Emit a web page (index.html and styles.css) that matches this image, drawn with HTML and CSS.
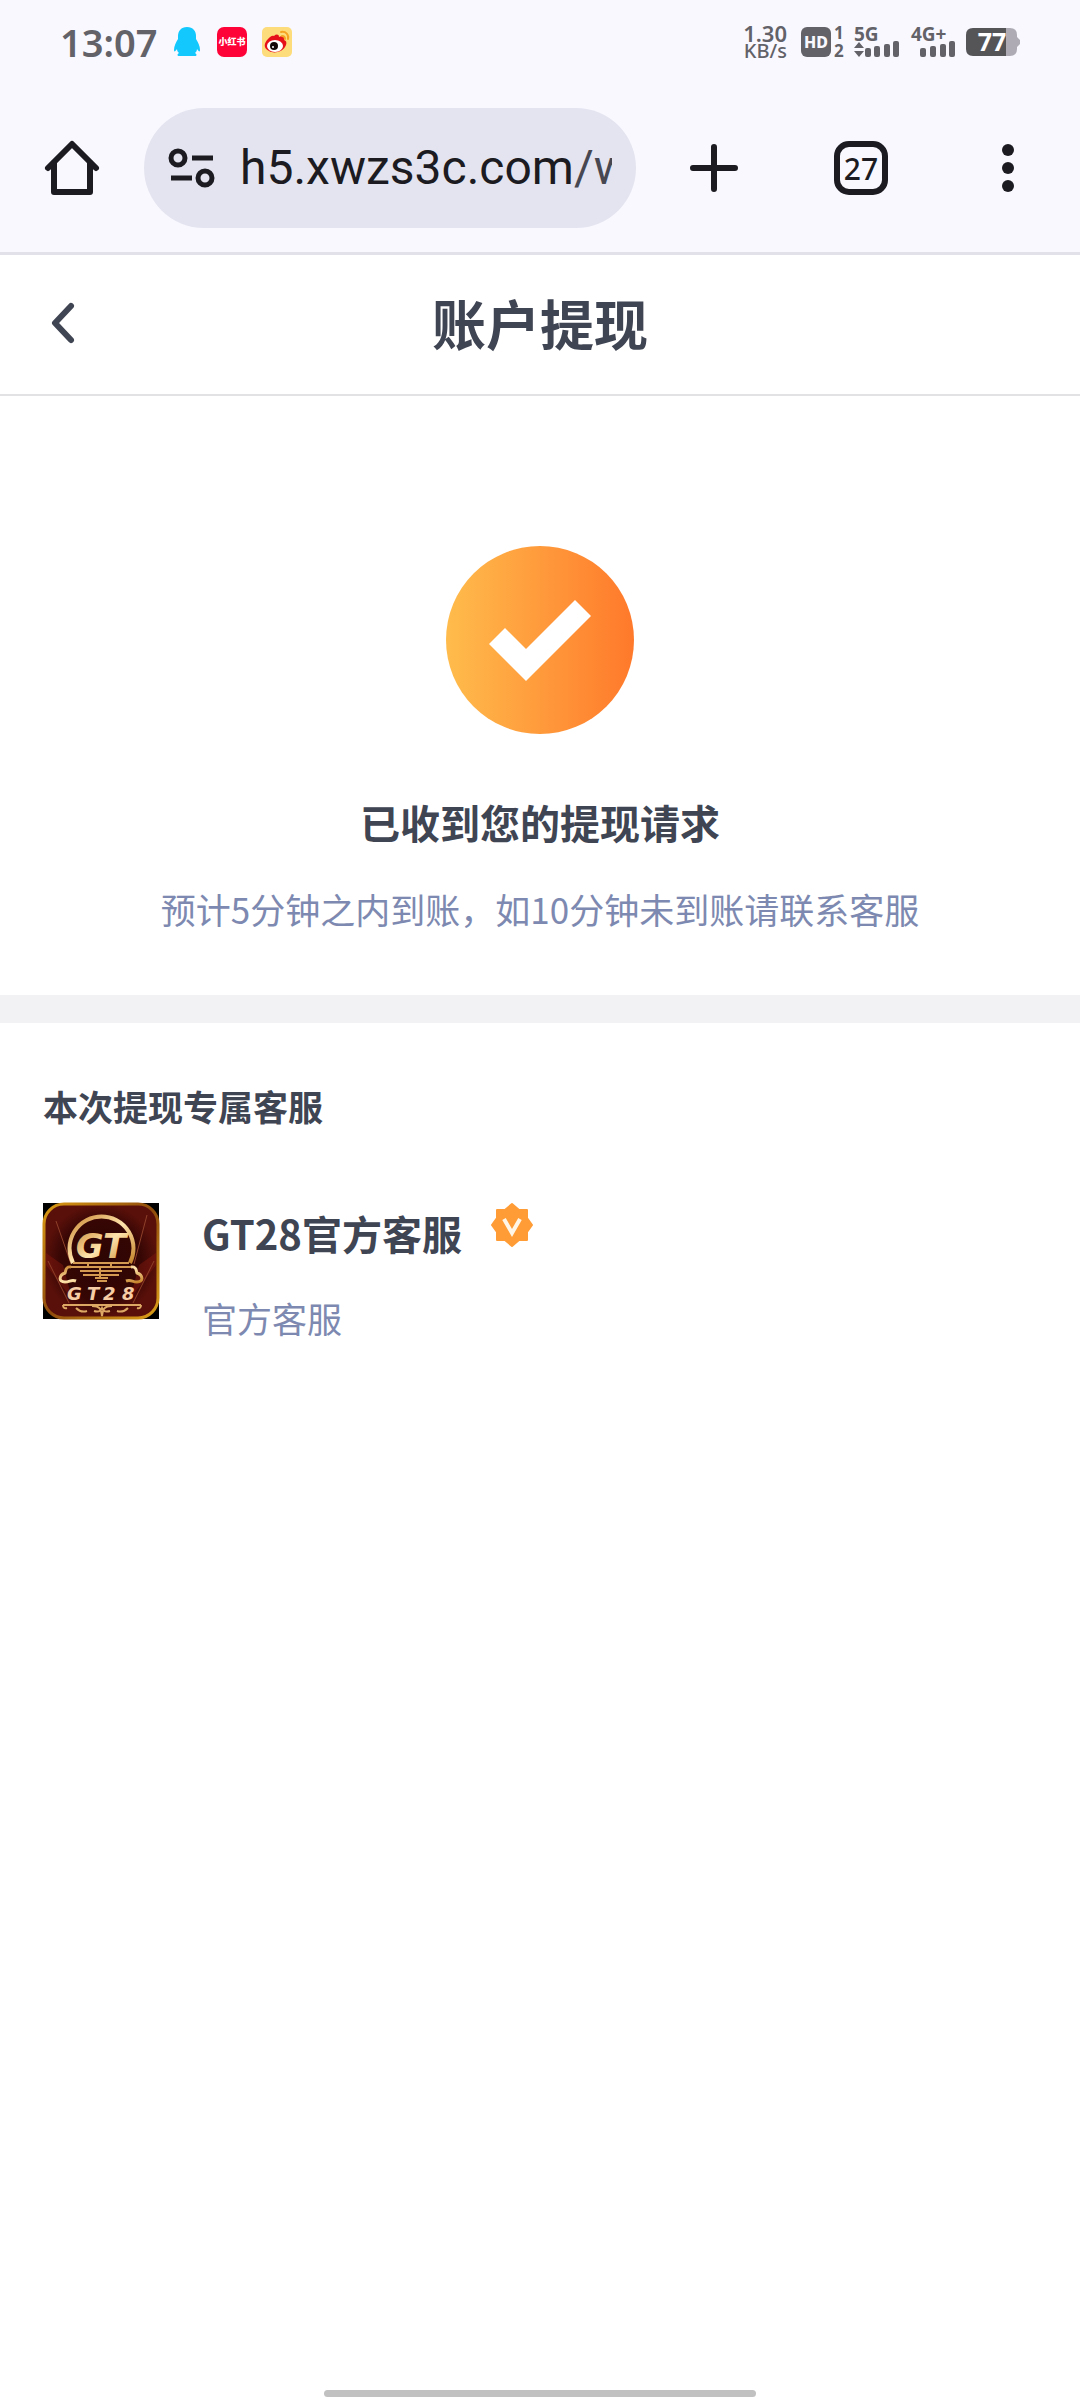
FILE: index.html
```html
<!DOCTYPE html>
<html lang="zh-CN">
<head>
<meta charset="utf-8">
<meta name="viewport" content="width=device-width, initial-scale=1">
<title>账户提现</title>
<link rel="stylesheet" href="styles.css">
</head>
<body>
<div class="screen">
  <div class="chrome">
    <div class="status">
      <div class="status-left">
        <span class="clock">13:07</span>
        <svg class="app-icon" viewBox="0 0 30 30" aria-hidden="true"><path fill="#12c8fd" d="M15 0C9 0 6 4 6 9v3C4 15 2 19 2 23c0 2 1 2 3-1 0 2 1 3 2 4-2 1-2 3 0 3h16c2 0 2-2 0-3 1-1 2-2 2-4 2 3 3 3 3 1 0-4-2-8-4-11V9c0-5-3-9-9-9z"/></svg>
        <svg class="app-icon" viewBox="0 0 30 30" aria-hidden="true"><rect width="30" height="30" rx="7" fill="#fe0338"/><text class="red-text" x="15" y="18" text-anchor="middle">小红书</text></svg>
        <svg class="app-icon" viewBox="0 0 30 30" aria-hidden="true"><rect width="30" height="30" rx="5" fill="#fddd7b"/><path fill="#e6101b" d="M12 9c2-2 5-2 5 1 4-2 7-1 5 3 3 1 3 4 1 7-3 5-11 7-16 4-6-3-5-8-1-12 2-2 4-4 6-3z"/><ellipse cx="13" cy="19" rx="8" ry="6" fill="#fff"/><circle cx="12" cy="19" r="4" fill="#120808"/><circle cx="11" cy="20" r="1" fill="#fff"/><path fill="none" stroke="#f6a323" stroke-width="2" stroke-linecap="round" d="M19 5c5-1 8 3 7 7M20 9c2 0 3 1 3 3"/></svg>
      </div>
      <div class="status-right">
        <div class="speed"><span class="rate">1.30</span><span>KB/s</span></div>
        <svg class="hd" viewBox="0 0 44 32" aria-hidden="true"><rect x="1" y="1" width="30" height="30" rx="6" fill="#626268"/><text class="hd-text" x="16" y="22" text-anchor="middle">HD</text><text class="tiny" x="34" y="13">1</text><text class="tiny" x="34" y="31">2</text></svg>
        <svg class="signal" viewBox="0 0 46 32" aria-hidden="true"><text class="net" x="0" y="15">5G</text><path fill="#626268" d="M5 16l5 6H0zM5 31l5-6H0z"/><g fill="#626268"><rect x="11" y="22" width="6" height="9" rx="2"/><rect x="20" y="20" width="6" height="11" rx="2"/><rect x="30" y="18" width="6" height="13" rx="2"/><rect x="39" y="15" width="6" height="16" rx="2"/></g></svg>
        <svg class="signal" viewBox="0 0 46 32" aria-hidden="true"><text class="net" x="1" y="15">4G+</text><g fill="#626268"><rect x="10" y="22" width="6" height="9" rx="2"/><rect x="20" y="20" width="6" height="11" rx="2"/><rect x="30" y="18" width="6" height="13" rx="2"/><rect x="39" y="15" width="6" height="16" rx="2"/></g></svg>
        <svg class="battery" viewBox="0 0 54 28" aria-hidden="true"><path fill="#aeabb5" d="M34 0h10q7 0 7 7v2l3 3v4l-3 3v2q0 7-7 7H34z"/><path fill="#555558" d="M7 0h33v28H7q-7 0-7-7V7q0-7 7-7z"/><text class="level" x="26" y="23" text-anchor="middle">77</text></svg>
      </div>
    </div>
    <div class="toolbar">
      <button class="icon-btn" aria-label="主页"><svg width="54" height="54" viewBox="0 0 54 54"><g fill="none" stroke="#1b1b21" stroke-width="6" stroke-linecap="round" stroke-linejoin="round"><path d="M3 27L27 3l24 24"/><path d="M9 22v29h36V22"/></g></svg></button>
      <div class="omnibox">
        <svg width="46" height="40" viewBox="0 0 46 40" aria-hidden="true"><g fill="none" stroke="#1b1b21" stroke-width="5"><circle cx="10" cy="10" r="7"/><path d="M24 10h21M3 30h21"/><circle cx="37" cy="30" r="7"/></g></svg>
        <a class="url" href="#">h5.xwzs3c.com<span class="path">/w</span></a>
      </div>
      <div class="actions">
        <button class="icon-btn" aria-label="新标签页"><svg width="54" height="54" viewBox="0 0 54 54"><path d="M27 6v42M6 27h42" stroke="#1b1b21" stroke-width="6" stroke-linecap="round"/></svg></button>
        <button class="icon-btn" aria-label="标签页"><span class="tabs">27</span></button>
        <button class="icon-btn" aria-label="更多"><svg width="54" height="54" viewBox="0 0 54 54"><g fill="#1b1b21"><circle cx="27" cy="9" r="6"/><circle cx="27" cy="27" r="6"/><circle cx="27" cy="45" r="6"/></g></svg></button>
      </div>
    </div>
  </div>

  <header class="page-head">
    <button class="back" aria-label="返回"><svg width="24" height="40" viewBox="0 0 24 40"><path d="M21 3L5 20l16 17" fill="none" stroke="#404553" stroke-width="6" stroke-linecap="round" stroke-linejoin="round"/></svg></button>
    <h1>账户提现</h1>
  </header>

  <main>
    <section class="result">
      <svg width="188" height="188" viewBox="0 0 188 188" aria-hidden="true"><defs><linearGradient id="orange"><stop offset="0" stop-color="#ffbc4c"/><stop offset="1" stop-color="#ff792b"/></linearGradient></defs><circle cx="94" cy="94" r="94" fill="url(#orange)"/><path fill="#fff" d="M43 98l16-16 21 21 49-49 16 16-65 65z"/></svg>
      <h2>已收到您的提现请求</h2>
      <p>预计5分钟之内到账，如10分钟未到账请联系客服</p>
    </section>
    <section class="service">
      <h3>本次提现专属客服</h3>
      <div class="agent">
        <svg class="avatar" viewBox="0 0 116 116" role="img" aria-label="GT28">
          <defs>
            <radialGradient id="wine"><stop offset="0" stop-color="#2c0503"/><stop offset=".7" stop-color="#350604"/><stop offset="1" stop-color="#5a100a"/></radialGradient>
            <linearGradient id="gold" x2="1" y2="1"><stop offset="0" stop-color="#c98632"/><stop offset=".5" stop-color="#ffe4ac"/><stop offset="1" stop-color="#c48229"/></linearGradient>
            <linearGradient id="frame" y2="1"><stop offset="0" stop-color="#d99a13"/><stop offset=".5" stop-color="#8f4b0c"/><stop offset="1" stop-color="#dca019"/></linearGradient>
          </defs>
          <rect width="116" height="116" fill="#000"/>
          <rect x="1" y="1" width="114" height="114" rx="20" fill="url(#wine)" stroke="url(#frame)" stroke-width="3"/>
          <g fill="#7d180e" opacity=".5"><path d="M3 50l17 12 9 34L3 62zM113 50L96 62l-9 34 26-34z"/></g>
          <g fill="none" stroke="#8e4029"><path d="M13 18l15 43M104 12L91 61M5 58l21 42M111 58L90 100"/></g>
          <path d="M30 60A32 32 0 1 1 87 60" fill="none" stroke="url(#gold)" stroke-width="4"/>
          <text class="mark" x="58" y="55" text-anchor="middle">GT</text>
          <g fill="none" stroke="#d59a51" stroke-width="2"><path d="M30 60h56M28 64h60M37 68h42M40 72h36M52 75h13M54 78h10M45 60v4M68 60v4M57 64v10"/></g>
          <g fill="none" stroke="url(#gold)" stroke-width="3"><path d="M28 64c-6-1-5 4-6 6-6 2-7 9 0 9 5 0 6-3 11-1M88 64c6-1 5 4 6 6 6 2 7 9 0 9-5 0-6-3-11-1"/></g>
          <text class="brand" x="24" y="97">G</text><text class="brand" x="44" y="97">T</text><text class="brand" x="60" y="97">2</text><text class="brand" x="79" y="97">8</text>
          <g fill="none" stroke="#dca864" stroke-width="2"><path d="M20 102h78M20 102q0 4 4 3M98 102q0 4-4 3M33 105q5 5 11 3M85 105q-5 5-11 3M49 103c8 0 9 3 10 10 1-7 2-10 10-10M51 108q6 2 8-3 2 5 8 3"/></g>
        </svg>
        <div class="info">
          <div class="name-row"><strong>GT28官方客服</strong>
            <svg width="42" height="44" viewBox="0 0 42 44" aria-hidden="true"><path fill="#ff9c36" stroke="#ff9c36" stroke-width="2" stroke-linejoin="round" d="M21 1l7 6h8v8l5 7-5 7v8h-8l-7 6-7-6H6v-8l-5-7 5-7V7h8z"/><path d="M13 16l8 14 8-14" fill="none" stroke="#fff6e7" stroke-width="4"/></svg>
          </div>
          <p>官方客服</p>
        </div>
      </div>
    </section>
  </main>
  <div class="gesture"></div>
</div>
</body>
</html>
```
FILE: styles.css
```css
* { box-sizing: border-box; }
body { margin: 0; background: #fff; color: #404553; font-family: "Noto Sans CJK SC", sans-serif; }
h1, h2, h3, p { margin: 0; }
button { border: 0; padding: 0; background: none; color: inherit; font: inherit; }
svg { display: block; flex: none; overflow: visible; }
.screen { min-height: 100vh; display: flex; flex-direction: column; }

.chrome { background: #f9f8ff; border-bottom: 3px solid #e2e1e9; }
.status { height: 84px; padding: 0 60px; display: flex; justify-content: space-between; align-items: center; color: #626268; font-family: "Noto Sans", sans-serif; }
.status-left { display: flex; align-items: center; gap: 15px; }
.clock { font-size: 38px; line-height: 40px; font-weight: 600; }
.app-icon { width: 30px; height: 30px; }
.red-text { font: 900 9px "Noto Sans CJK SC", sans-serif; fill: #fff; }
.status-right { display: flex; align-items: center; gap: 10px; }
.speed { display: flex; flex-direction: column; align-items: flex-end; font-size: 20px; line-height: 18px; font-weight: 500; margin-right: 3px; }
.rate { font-size: 22px; font-weight: 600; }
.hd { width: 44px; height: 32px; }
.hd-text { font: 800 16px "Noto Sans", sans-serif; fill: #f9f8ff; }
.tiny { font: 700 17px "Noto Sans", sans-serif; fill: #626268; }
.signal { width: 46px; height: 32px; }
.net { font: 700 19px "Noto Sans", sans-serif; fill: #626268; }
.battery { width: 54px; height: 28px; }
.level { font: 700 25px "Noto Sans", sans-serif; fill: #fff; }

.toolbar { height: 168px; padding: 0 45px; display: flex; align-items: center; gap: 45px; }
.icon-btn { width: 54px; height: 54px; flex: none; }
.omnibox { flex: 1; min-width: 0; height: 120px; padding: 0 24px; border-radius: 60px; background: #e4e4f0; display: flex; align-items: center; gap: 26px; }
.url { flex: 1; min-width: 0; overflow: hidden; white-space: nowrap; font-family: Roboto, sans-serif; font-size: 48px; line-height: 60px; color: #1b1b21; text-decoration: none; }
.path { color: #474751; }
.actions { display: flex; gap: 93px; padding-left: 6px; }
.tabs { display: flex; height: 54px; align-items: center; justify-content: center; border: 6px solid #1b1b21; border-radius: 15px; color: #1b1b21; font: 500 30px "Noto Sans", sans-serif; }

.page-head { height: 141px; padding: 0 50px 4px; border-bottom: 2px solid #e2e2e4; display: grid; grid-template-columns: 1fr auto 1fr; align-items: center; }
.back { width: 24px; height: 40px; }
h1 { font-size: 54px; line-height: 80px; font-weight: 700; }

main { flex: 1; }
.result { padding: 150px 40px 61px; display: flex; flex-direction: column; align-items: center; border-bottom: 28px solid #f2f2f4; }
h2 { margin-top: 58px; font-size: 40px; line-height: 60px; }
p { font-size: 35px; line-height: 50px; color: #7d89b0; }
.result p { margin-top: 32px; }
.service { padding: 58px 43px; }
h3 { font-size: 35px; line-height: 50px; }
.agent { margin-top: 72px; display: flex; gap: 43px; }
.avatar { width: 116px; height: 116px; }
.mark { font: italic 700 34px "DejaVu Sans", sans-serif; fill: url(#gold); }
.brand { font: italic 700 18px "DejaVu Sans", sans-serif; fill: #f6cda4; }
.name-row { display: flex; gap: 29px; }
strong { font-size: 40px; line-height: 60px; }
.info p { margin-top: 30px; }
.gesture { width: 40%; height: 7px; margin: 0 auto 3px; border-radius: 4px; background: #c1c1c1; }
```
